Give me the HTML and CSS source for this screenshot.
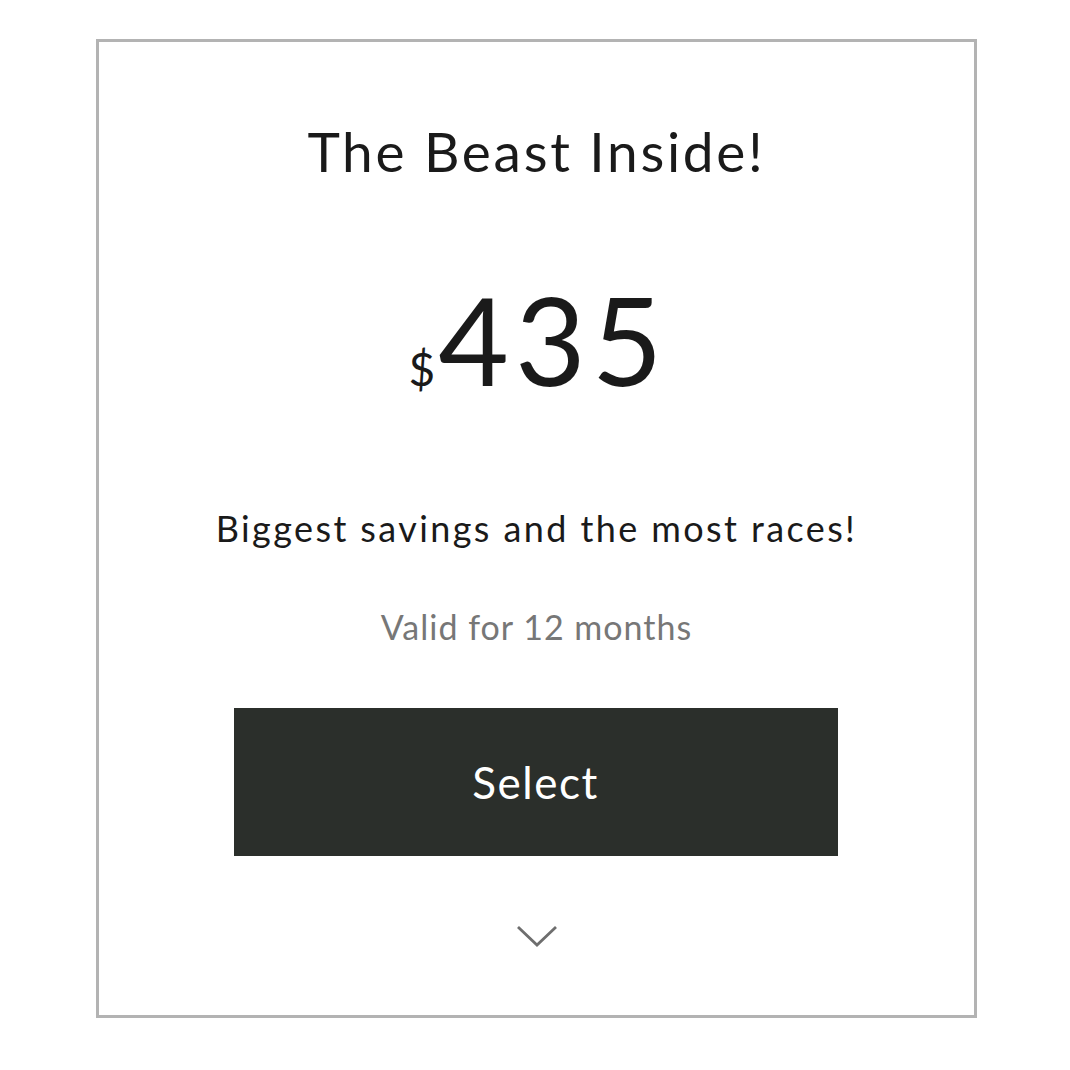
FILE: index.html
```html
<!DOCTYPE html>
<html lang="en">
<head>
<meta charset="utf-8">
<title>The Beast Inside!</title>
<link rel="stylesheet" href="styles.css">
</head>
<body>
<div class="page">
  <section class="card">
    <h2 class="title">The Beast Inside!</h2>
    <div class="price"><span class="currency">$</span><span class="amount">435</span></div>
    <p class="tagline">Biggest savings and the most races!</p>
    <p class="validity">Valid for 12 months</p>
    <button class="select-btn" type="button">Select</button>
    <div class="expand">
      <svg width="42" height="24" viewBox="0 0 42 24" aria-hidden="true"><path d="M2 3 L21 21 L40 3" fill="none" stroke="#6e6e6e" stroke-width="2.8"/></svg>
    </div>
  </section>
</div>
</body>
</html>
```
FILE: styles.css
```css
html, body {
  margin: 0;
  padding: 0;
  background: #ffffff;
}
.page {
  padding: 39px 0 0 96px;
}
.card {
  box-sizing: border-box;
  width: 881px;
  height: 979px;
  border: 3px solid #b3b3b3;
  display: flex;
  flex-direction: column;
  align-items: center;
  font-family: Lato, "Liberation Sans", sans-serif;
  color: #1a1a1a;
}
.title {
  margin: 77px 0 0;
  font-size: 55px;
  font-weight: 400;
  line-height: 64px;
  letter-spacing: 2.7px;
}
.price {
  margin-top: 95px;
  display: flex;
  align-items: baseline;
  line-height: 1;
}
.currency {
  font-size: 46px;
  margin-right: 3px;
}
.amount {
  font-size: 122px;
  letter-spacing: 6px;
  margin-right: -4px;
}
.tagline {
  margin: 108px 0 0;
  font-size: 36px;
  line-height: 40px;
  letter-spacing: 2.4px;
}
.validity {
  margin: 59px 0 0;
  font-size: 34px;
  line-height: 40px;
  letter-spacing: 1px;
  color: #777777;
}
.select-btn {
  margin: 61px 2px 0 0;
  width: 604px;
  height: 148px;
  border: none;
  border-radius: 0;
  background: #2b2f2b;
  color: #ffffff;
  font-family: Lato, "Liberation Sans", sans-serif;
  font-size: 44px;
  letter-spacing: 1.5px;
}
.expand {
  margin-top: 68px;
  display: flex;
  justify-content: center;
}
```
